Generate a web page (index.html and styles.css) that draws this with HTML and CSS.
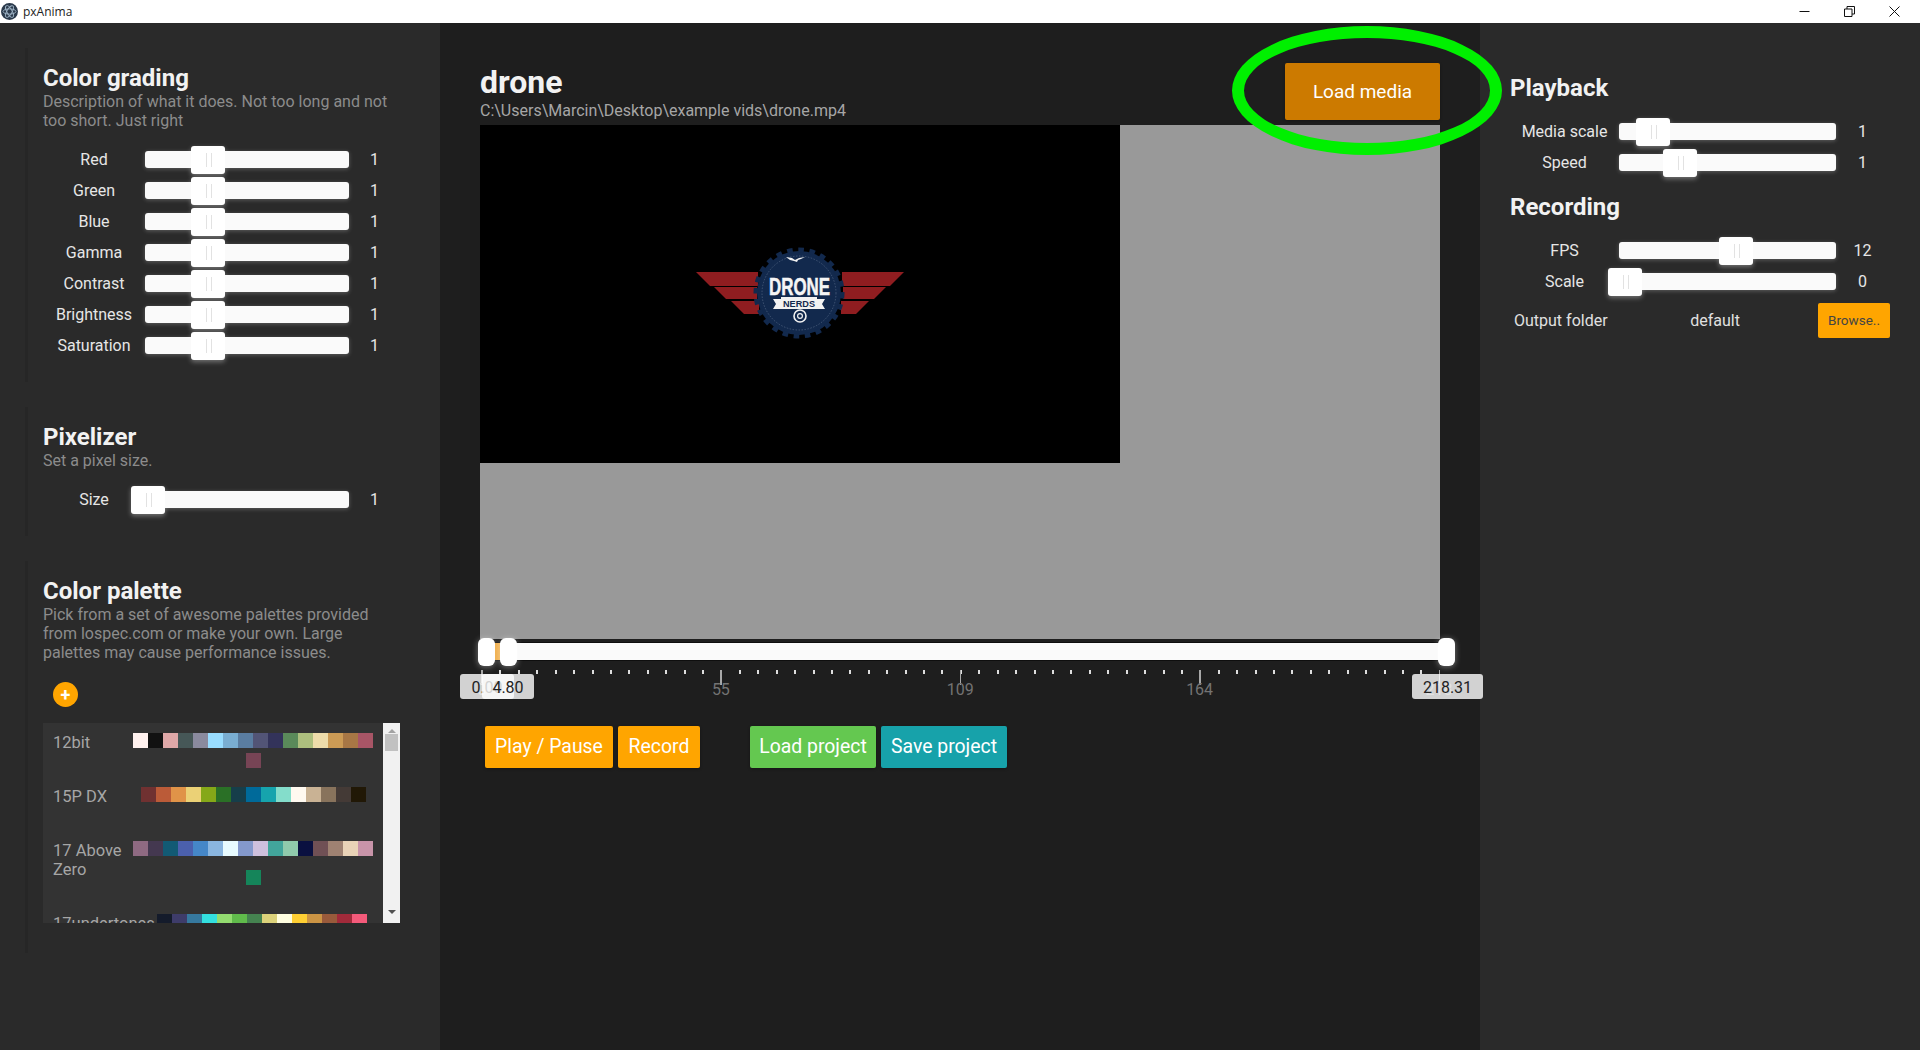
FILE: index.html
```html
<!DOCTYPE html>
<html lang="en">
  <head>
    <meta charset="UTF-8" />
    <title>pxAnima</title>
    <link rel="stylesheet" href="styles.css">
  </head>
  <body>
    <header class="titlebar">
      <svg class="app-icon" width="17" height="17" viewBox="0 0 17 17">
        <circle cx="8.5" cy="8.5" r="8.5" fill="#2b3a4c" />
        <g fill="none" stroke="#9fb4c6" stroke-width="0.9">
          <ellipse cx="8.5" cy="8.5" rx="6.5" ry="2.6" />
          <ellipse cx="8.5" cy="8.5" rx="6.5" ry="2.6" transform="rotate(60 8.5 8.5)" />
          <ellipse cx="8.5" cy="8.5" rx="6.5" ry="2.6" transform="rotate(120 8.5 8.5)" />
        </g>
      </svg>
      <span class="app-name">pxAnima</span>
      <div class="window-btns">
        <svg width="11" height="11" viewBox="0 0 11 11"><path d="M0.5 5.5h10" stroke="#111" fill="none" /></svg>
        <svg width="11" height="11" viewBox="0 0 11 11"><path d="M0.5 3h7.5v7.5h-7.5zM3 3v-2.5h7.5v7.5h-2.5" stroke="#111" fill="none" /></svg>
        <svg width="11" height="11" viewBox="0 0 11 11"><path d="M0.5 0.5l10 10M10.5 0.5l-10 10" stroke="#111" fill="none" /></svg>
      </div>
    </header>

    <div class="app">
      <aside class="panel">
        <section class="card">
          <h2>Color grading</h2>
          <p class="desc">Description of what it does. Not too long and not<br />too short. Just right</p>
          <div class="sliders">
            <div class="row"><label>Red</label><div class="track"><i class="thumb" style="left: 46px"></i></div><span>1</span></div>
            <div class="row"><label>Green</label><div class="track"><i class="thumb" style="left: 46px"></i></div><span>1</span></div>
            <div class="row"><label>Blue</label><div class="track"><i class="thumb" style="left: 46px"></i></div><span>1</span></div>
            <div class="row"><label>Gamma</label><div class="track"><i class="thumb" style="left: 46px"></i></div><span>1</span></div>
            <div class="row"><label>Contrast</label><div class="track"><i class="thumb" style="left: 46px"></i></div><span>1</span></div>
            <div class="row"><label>Brightness</label><div class="track"><i class="thumb" style="left: 46px"></i></div><span>1</span></div>
            <div class="row"><label>Saturation</label><div class="track"><i class="thumb" style="left: 46px"></i></div><span>1</span></div>
          </div>
        </section>

        <section class="card">
          <h2>Pixelizer</h2>
          <p class="desc">Set a pixel size.</p>
          <div class="sliders">
            <div class="row"><label>Size</label><div class="track"><i class="thumb" style="left: -14px"></i></div><span>1</span></div>
          </div>
        </section>

        <section class="card card-palette">
          <h2>Color palette</h2>
          <p class="desc">Pick from a set of awesome palettes provided<br />from lospec.com or make your own. Large<br />palettes may cause performance issues.</p>
          <button class="add-btn">+</button>
          <div class="palette-box">
            <div class="palette-list">
              <div class="palette-row">
                <div class="palette-name">12bit</div>
                <div class="swatches">
                  <i style="background:#fff1ee"></i><i style="background:#111111"></i><i style="background:#dfa8a8"></i><i style="background:#465757"></i><i style="background:#8a8a9e"></i><i style="background:#99ddff"></i><i style="background:#7aaed2"></i><i style="background:#5a7da1"></i><i style="background:#525476"></i><i style="background:#33335a"></i><i style="background:#5a8a5a"></i><i style="background:#adbf7e"></i><i style="background:#eedcaa"></i><i style="background:#cc9b55"></i><i style="background:#a87745"></i><i style="background:#a85566"></i><i style="background:#774455"></i>
                </div>
              </div>
              <div class="palette-row">
                <div class="palette-name">15P DX</div>
                <div class="swatches">
                  <i style="background:#703131"></i><i style="background:#bb5b38"></i><i style="background:#e09348"></i><i style="background:#ebd176"></i><i style="background:#85a818"></i><i style="background:#2a7026"></i><i style="background:#163e4a"></i><i style="background:#006a9a"></i><i style="background:#16a4ad"></i><i style="background:#84ddcb"></i><i style="background:#fff9f0"></i><i style="background:#c9b294"></i><i style="background:#88735c"></i><i style="background:#443a36"></i><i style="background:#211806"></i>
                </div>
              </div>
              <div class="palette-row palette-row-tall">
                <div class="palette-name">17 Above Zero</div>
                <div class="swatches">
                  <i style="background:#8f6a82"></i><i style="background:#443850"></i><i style="background:#125a74"></i><i style="background:#4b60ad"></i><i style="background:#4587c8"></i><i style="background:#8ab6e0"></i><i style="background:#e8fbff"></i><i style="background:#8499cc"></i><i style="background:#cec0dd"></i><i style="background:#42a59b"></i><i style="background:#90caac"></i><i style="background:#0a1040"></i><i style="background:#705055"></i><i style="background:#9f8272"></i><i style="background:#e9d3b7"></i><i style="background:#c894a9"></i><i style="background:#15855a"></i>
                </div>
              </div>
              <div class="palette-row palette-row-long">
                <div class="palette-name">17undertones</div>
                <div class="swatches">
                  <i style="background:#141b2b"></i><i style="background:#3e3c6a"></i><i style="background:#36799f"></i><i style="background:#33e0e0"></i><i style="background:#93dc70"></i><i style="background:#60bb4b"></i><i style="background:#458350"></i><i style="background:#dcd27a"></i><i style="background:#fffee0"></i><i style="background:#ffcf33"></i><i style="background:#cb9444"></i><i style="background:#995a3b"></i><i style="background:#a12a3a"></i><i style="background:#f45a7a"></i>
                </div>
              </div>
            </div>
            <div class="scrollbar">
              <b class="arrow-up"></b>
              <b class="scroll-thumb"></b>
              <b class="arrow-down"></b>
            </div>
          </div>
        </section>
      </aside>

      <main class="center">
        <div class="media-head">
          <div>
            <h1>drone</h1>
            <p class="media-path">C:\Users\Marcin\Desktop\example vids\drone.mp4</p>
          </div>
          <button class="btn btn-load">Load media</button>
        </div>

        <div class="stage">
          <div class="video">
            <svg width="208" height="100" viewBox="0 0 208 100">
              <g fill="#8f1d20">
                <path d="M0 28h62v14h-48z" />
                <path d="M18 43h43v12h-31z" />
                <path d="M35 57h28v13h-15z" />
                <path d="M208 28h-62v14h48z" />
                <path d="M190 43h-43v12h31z" />
                <path d="M173 57h-28v13h15z" />
              </g>
              <circle cx="103" cy="49" r="42" fill="#12294d" />
              <circle cx="103" cy="49" r="43" fill="none" stroke="#12294d" stroke-width="5" stroke-dasharray="5.6 5.6" />
              <circle cx="103" cy="49" r="37" fill="none" stroke="#5d6f8c" stroke-width="0.6" stroke-dasharray="1.5 1.5" />
              <path d="M90 13l6 1 3 2 4-2 6-1-4 2-3 1-1 2-3-1-4-1z" fill="#f2f2f2" />
              <text class="logo-big" x="103.5" y="51" text-anchor="middle" textLength="61" lengthAdjust="spacingAndGlyphs">DRONE</text>
              <path d="M77 55h8v-2h36v2h8l-3 5 3 5h-52l3-5z" fill="#f2f2f2" />
              <text class="logo-small" x="103" y="63" text-anchor="middle" textLength="32" lengthAdjust="spacingAndGlyphs">NERDS</text>
              <circle cx="104" cy="72" r="6" fill="#12294d" stroke="#f2f2f2" stroke-width="1.6" />
              <circle cx="104" cy="72" r="2.4" fill="none" stroke="#f2f2f2" stroke-width="1.2" />
            </svg>
          </div>
        </div>

        <div class="timeline">
          <div class="time-track"></div>
          <i class="time-thumb" style="left: -2px"></i>
          <i class="time-range"></i>
          <i class="time-thumb" style="left: 20px"></i>
          <i class="time-thumb" style="left: 958px"></i>
          <div class="ticks">
            <div class="major"><span>0</span></div>
            <div class="major"><span>55</span></div>
            <div class="major"><span>109</span></div>
            <div class="major"><span>164</span></div>
            <div class="major"><span>218</span></div>
          </div>
          <div class="tip" style="left: -20px; width: 54px">0.00</div>
          <div class="tip" style="left: 2px; width: 52px">4.80</div>
          <div class="tip" style="left: 932px; width: 71px">218.31</div>
        </div>

        <div class="actions">
          <button class="btn btn-orange btn-play">Play / Pause</button>
          <button class="btn btn-orange btn-record">Record</button>
          <button class="btn btn-green btn-project actions-gap">Load project</button>
          <button class="btn btn-teal btn-project">Save project</button>
        </div>
      </main>

      <aside class="panel panel-right">
        <h2>Playback</h2>
        <div class="sliders">
          <div class="row row-wide"><label>Media scale</label><div class="track"><i class="thumb" style="left: 17px"></i></div><span>1</span></div>
          <div class="row row-wide"><label>Speed</label><div class="track"><i class="thumb" style="left: 44px"></i></div><span>1</span></div>
        </div>
        <h2 class="recording-title">Recording</h2>
        <div class="sliders">
          <div class="row row-wide"><label>FPS</label><div class="track"><i class="thumb" style="left: 100px"></i></div><span>12</span></div>
          <div class="row row-wide"><label>Scale</label><div class="track"><i class="thumb" style="left: -11px"></i></div><span>0</span></div>
        </div>
        <div class="output-row">
          <span>Output folder</span>
          <span class="output-path">default</span>
          <button class="browse-btn">Browse..</button>
        </div>
      </aside>
    </div>

    <!-- annotation drawn over the screenshot -->
    <div class="highlight"></div>
  </body>
</html>
```

FILE: styles.css
```css
* {
  margin: 0;
  padding: 0;
  box-sizing: border-box;
}
body {
  width: 1920px;
  height: 1050px;
  overflow: hidden;
  display: flex;
  flex-direction: column;
  position: relative;
  font-family: Roboto, "Liberation Sans", sans-serif;
  font-size: 16px;
  color: #eee;
  background-color: #1e1e1e;
}
button {
  font-family: inherit;
  border: 0;
}

/* title bar */
.titlebar {
  height: 23px;
  flex: none;
  display: flex;
  align-items: center;
  padding: 0 0 0 1px;
  background-color: #fff;
  color: #222;
}
.app-name {
  margin-left: 5px;
  font-family: "Open Sans", sans-serif;
  font-size: 12px;
}
.window-btns {
  margin-left: auto;
  margin-right: 20px;
  display: flex;
  gap: 34px;
}

/* columns */
.app {
  flex: 1;
  display: flex;
  min-height: 0;
}
.panel {
  width: 440px;
  flex: none;
  padding: 25px 0 0 25px;
  background-color: #2a2a2a;
}
.panel-right {
  padding: 51px 0 0 30px;
}
.center {
  flex: 1;
  padding: 0 40px;
}

/* cards */
.card {
  border-left: 3px solid #262626;
  padding: 16px 0 21px 15px;
  margin-bottom: 25px;
}
.card-palette {
  padding-bottom: 30px;
}
h2 {
  font-size: 24px;
  line-height: 28px;
  font-weight: 700;
  color: #f2f2f2;
}
.desc {
  font-size: 16px;
  line-height: 19px;
  color: #8c8c8c;
}
.sliders {
  margin-top: 14px;
}
.recording-title {
  margin-top: 15px;
}

/* slider rows */
.row {
  height: 31px;
  display: grid;
  grid-template-columns: 102px 204px 51px;
  align-items: center;
  text-align: center;
  color: #e6e6e6;
}
.row-wide {
  grid-template-columns: 109px 217px 53px;
}
.track {
  height: 17px;
  position: relative;
  background-color: #fafafa;
  border-radius: 3px;
  box-shadow: 0 1px 4px rgba(255, 255, 255, 0.25);
}
.thumb {
  position: absolute;
  top: -5px;
  width: 34px;
  height: 28px;
  background-color: #fff;
  border-radius: 3px;
  box-shadow: 0 2px 5px rgba(255, 255, 255, 0.35);
}
/* grip lines */
.thumb::after {
  content: "";
  position: absolute;
  left: 15px;
  top: 7px;
  width: 4px;
  height: 14px;
  border-left: 1px solid #e2e2e2;
  border-right: 1px solid #e2e2e2;
}

/* palettes */
.add-btn {
  display: block;
  width: 25px;
  height: 25px;
  margin: 20px 0 16px 10px;
  border-radius: 50%;
  background-color: #ffa500;
  color: #fff;
  font-size: 18px;
  font-weight: 700;
  line-height: 25px;
}
.palette-box {
  width: 357px;
  height: 200px;
  display: flex;
  overflow: hidden;
}
.palette-list {
  width: 340px;
  background-color: #333;
  overflow: hidden;
}
.palette-row {
  height: 54px;
  padding: 10px 0 0 10px;
  display: grid;
  grid-template-columns: 80px 240px;
}
.palette-row-tall {
  height: 73px;
}
.palette-row-long {
  grid-template-columns: 104px 210px;
}
.palette-name {
  font-size: 16.5px;
  line-height: 19px;
  color: #a6a6a6;
}
.swatches {
  display: flex;
  flex-wrap: wrap;
  justify-content: center;
  align-content: flex-start;
  row-gap: 5px;
}
.palette-row-tall .swatches {
  row-gap: 14px;
}
.swatches i {
  width: 15px;
  height: 15px;
}
.scrollbar {
  width: 17px;
  display: flex;
  flex-direction: column;
  align-items: center;
  padding: 6px 0 6px;
  background-color: #f1f1f1;
}
.arrow-up {
  border: 4px solid transparent;
  border-top: 0;
  border-bottom: 4px solid #a3a3a3;
}
.scroll-thumb {
  width: 13px;
  height: 17px;
  margin-top: 1px;
  background-color: #c1c1c1;
}
.arrow-down {
  margin-top: auto;
  margin-bottom: 3px;
  border: 4px solid transparent;
  border-bottom: 0;
  border-top: 4px solid #505050;
}

/* media header */
.media-head {
  height: 102px;
  display: flex;
  justify-content: space-between;
  align-items: flex-end;
  padding-bottom: 5px;
}
h1 {
  font-size: 32px;
  line-height: 38px;
  font-weight: 700;
  color: #f2f2f2;
}
.media-path {
  font-size: 16px;
  line-height: 18px;
  margin-top: 1px;
  color: #a6a6a6;
}
.btn {
  height: 42px;
  border-radius: 2px;
  font-size: 19.4px;
  line-height: 40px;
  color: #fff;
  box-shadow: 0 1px 3px rgba(0, 0, 0, 0.3);
}
.btn-load {
  width: 155px;
  height: 57px;
  font-size: 19px;
  background-color: #cc7a00;
}
.btn-play {
  width: 128px;
}
.btn-record {
  width: 82px;
}
.btn-project {
  width: 126px;
}
.btn-orange {
  background-color: #ffa500;
}
.btn-green {
  background-color: #64c850;
}
.btn-teal {
  background-color: #17a2aa;
}

/* stage */
.stage {
  height: 514px;
  background-color: #999;
}
.video {
  width: 640px;
  height: 338px;
  display: flex;
  align-items: center;
  justify-content: center;
  background-color: #000;
}
.logo-big {
  font-family: "Liberation Sans", sans-serif;
  font-size: 23px;
  font-weight: 700;
  fill: #f5f5f5;
  stroke: #f5f5f5;
  stroke-width: 0.5;
}
.logo-small {
  font-family: "Liberation Sans", sans-serif;
  font-size: 8.5px;
  font-weight: 700;
  fill: #12294d;
}

/* timeline */
.timeline {
  height: 87px;
  position: relative;
  padding-top: 3px;
}
.time-track {
  height: 19px;
  background-color: #fafafa;
  border-top: 1px solid #0e0e0e;
  border-bottom: 1px solid #0e0e0e;
}
.time-thumb {
  position: absolute;
  top: -1px;
  width: 17px;
  height: 28px;
  background-color: #fff;
  border-radius: 6px;
  box-shadow: 0 1px 6px rgba(255, 255, 255, 0.4);
}
.time-range {
  position: absolute;
  left: 15px;
  top: 4px;
  width: 5px;
  height: 17px;
  background-color: #f0b050;
}
.ticks {
  height: 15px;
  margin: 9px 0 0 1px;
  width: 959px;
  display: flex;
  justify-content: space-between;
  background-image: repeating-linear-gradient(to right, #ddd 0, #ddd 2px, transparent 2px, transparent 18.42px);
  background-size: 100% 4px;
  background-repeat: no-repeat;
}
.major {
  width: 1.5px;
  height: 15px;
  position: relative;
  background-color: #a8a8a8;
}
.major span {
  position: absolute;
  top: 10px;
  left: -20px;
  width: 41px;
  text-align: center;
  font-size: 16px;
  line-height: 19px;
  color: #737373;
}
.tip {
  position: absolute;
  top: 35px;
  height: 25px;
  line-height: 27px;
  border-radius: 3px;
  background-color: rgba(255, 255, 255, 0.8);
  color: #222;
  text-align: center;
}

/* bottom buttons */
.actions {
  display: flex;
  gap: 5px;
  padding-left: 5px;
}
.actions-gap {
  margin-left: 45px;
}

/* output row */
.output-row {
  display: grid;
  grid-template-columns: 110px 182px 84px;
  align-items: center;
  height: 35px;
  margin-top: 6px;
  padding-left: 4px;
  color: #e0e0e0;
}
.output-path {
  text-align: center;
}
.browse-btn {
  width: 72px;
  height: 35px;
  margin-left: 12px;
  padding-bottom: 2px;
  border-radius: 2px;
  background-color: #ffa500;
  color: #444;
  font-size: 13.5px;
}

/* green ellipse over the load button */
.highlight {
  position: absolute;
  left: 1232px;
  top: 26px;
  width: 270px;
  height: 129px;
  border: 12px solid #00f000;
  border-radius: 50%;
}
```
